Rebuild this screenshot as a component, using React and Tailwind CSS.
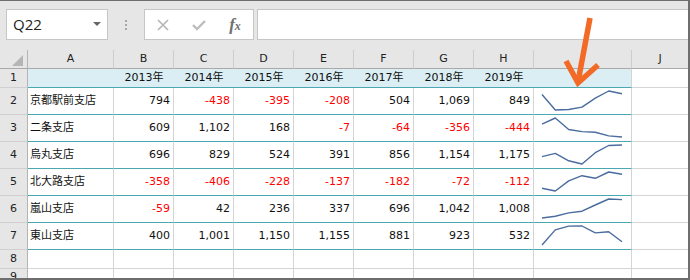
import React from "react";

const cols = ["A", "B", "C", "D", "E", "F", "G", "H", "I", "J"];
const years = [2013, 2014, 2015, 2016, 2017, 2018, 2019];

const branches = [
  { name: "京都駅前支店", values: [794, -438, -395, -208, 504, 1069, 849] },
  { name: "二条支店", values: [609, 1102, 168, -7, -64, -356, -444] },
  { name: "烏丸支店", values: [696, 829, 524, 391, 856, 1154, 1175] },
  { name: "北大路支店", values: [-358, -406, -228, -137, -182, -72, -112] },
  { name: "嵐山支店", values: [-59, 42, 236, 337, 696, 1042, 1008] },
  { name: "東山支店", values: [400, 1001, 1150, 1155, 881, 923, 532] },
];

const teal = "border-b-[#4ba7b1]";

function Sparkline({ values }) {
  const min = Math.min(...values);
  const max = Math.max(...values);
  const pts = values
    .map((v, i) => {
      const x = 8 + (i * 80) / 6;
      const y = 22 - ((v - min) / (max - min)) * 19;
      return `${x.toFixed(1)},${y.toFixed(1)}`;
    })
    .join(" ");
  return (
    <svg width="97" height="26" className="block">
      <polyline points={pts} fill="none" stroke="#4a6c9f" strokeWidth="1.4" strokeLinejoin="round" />
    </svg>
  );
}

function RowHead({ n }) {
  return (
    <div className="bg-[#e6e6e6] border-r border-b border-r-[#b4b4b4] border-b-[#cfcfcf] flex items-center justify-center text-[#222]">
      {n}
    </div>
  );
}

export default function App() {
  return (
    <div
      className="relative w-[690px] h-[280px] bg-[#e6e6e6] border-t border-r-2 border-b-2 border-[#6e6e6e] flex flex-col overflow-hidden text-[11px]"
      style={{ fontFamily: '"DejaVu Sans", "Noto Sans CJK JP", sans-serif' }}
    >
      {/* toolbar */}
      <div className="h-[49px] shrink-0 pt-[8px] pl-[6px] flex items-start">
        <div className="w-[102px] h-[31px] bg-white border border-[#c6c6c6] flex items-center justify-between pl-[6px] pr-[6px]">
          <span className="text-[15px] text-[#222]" style={{ fontFamily: '"Open Sans", sans-serif' }}>Q22</span>
          <svg width="8" height="5"><polygon points="0,0 8,0 4,4" fill="#666" /></svg>
        </div>
        <div className="w-[36px] h-[31px] flex flex-col items-center justify-center gap-[2px]">
          <div className="w-[2px] h-[2px] bg-[#a8a8a8]" />
          <div className="w-[2px] h-[2px] bg-[#a8a8a8]" />
          <div className="w-[2px] h-[2px] bg-[#a8a8a8]" />
        </div>
        <div className="w-[110px] h-[31px] bg-white border border-[#c6c6c6] flex items-center">
          <div className="w-[36px] flex justify-center">
            <svg width="12" height="12"><path d="M1 1 L11 11 M11 1 L1 11" stroke="#b5b5b5" strokeWidth="1.6" /></svg>
          </div>
          <div className="w-[36px] flex justify-center">
            <svg width="14" height="12"><path d="M1 6 L5 10 L13 2" stroke="#bdbdbd" strokeWidth="2.4" fill="none" /></svg>
          </div>
          <div className="w-[36px] flex justify-center">
            <span className="italic font-bold text-[#707070] text-[17px] leading-none" style={{ fontFamily: '"Liberation Serif", serif' }}>
              f<span className="text-[12px]">x</span>
            </span>
          </div>
        </div>
        <div className="ml-[3px] flex-1 h-[31px] bg-white border border-[#c6c6c6] border-r-0" />
      </div>

      {/* sheet */}
      <div className="flex-1 grid grid-cols-[28px_86px_60px_60px_60px_60px_60px_60px_60px_98px_1fr] grid-rows-[19px_19px_repeat(6,27px)_19px_1fr] bg-white text-[#111]">
        {/* column headers */}
        <div className="relative bg-[#e6e6e6] border-r border-b border-r-[#b4b4b4] border-b-[#a9a9a9]">
          <svg width="27" height="18" className="absolute left-0 top-0">
            <polygon points="23,5 23,16 12,16" fill="#b5b5b5" />
          </svg>
        </div>
        {cols.map((c, i) => (
          <div
            key={c}
            className={`bg-[#e6e6e6] border-b border-b-[#a9a9a9] flex items-center justify-center text-[#222] ${i < cols.length - 1 ? "border-r border-r-[#cdcdcd]" : ""}`}
          >
            {c}
          </div>
        ))}

        {/* row 1 */}
        <RowHead n={1} />
        <div className={`bg-[#daeef3] border-b ${teal}`} />
        {years.map((y) => (
          <div key={y} className={`bg-[#daeef3] border-b ${teal} flex items-center justify-center`}>
            {y}年
          </div>
        ))}
        <div className={`bg-[#daeef3] border-b border-r border-r-[#d4d4d4] ${teal}`} />
        <div className="border-b border-b-[#d4d4d4]" />

        {/* data rows */}
        {branches.map((b, r) => (
          <React.Fragment key={b.name}>
            <RowHead n={r + 2} />
            <div className={`border-r border-b border-r-[#d4d4d4] ${teal} flex items-center pl-[2px]`}>{b.name}</div>
            {b.values.map((v, i) => (
              <div
                key={i}
                className={`border-r border-b border-r-[#d4d4d4] ${teal} flex items-center justify-end pr-[3px] ${v < 0 ? "text-[#ff0000]" : ""}`}
              >
                {v.toLocaleString("en-US")}
              </div>
            ))}
            <div className={`border-r border-b border-r-[#d4d4d4] ${teal}`}>
              <Sparkline values={b.values} />
            </div>
            <div className="border-b border-b-[#d4d4d4]" />
          </React.Fragment>
        ))}

        {/* empty rows 8, 9 */}
        {[8, 9].map((n) => (
          <React.Fragment key={n}>
            <RowHead n={n} />
            {cols.map((c, i) => (
              <div
                key={c}
                className={`border-b border-b-[#d4d4d4] ${i < cols.length - 1 ? "border-r border-r-[#d4d4d4]" : ""}`}
              />
            ))}
          </React.Fragment>
        ))}
      </div>

      {/* orange arrow annotation */}
      <svg width="690" height="100" className="absolute left-0 top-[-1px] pointer-events-none">
        <path d="M590 18 L578 82" stroke="#f26a25" strokeWidth="5.5" fill="none" />
        <path d="M566 61 L578 83 L598 65" stroke="#f26a25" strokeWidth="5.5" fill="none" strokeLinejoin="miter" />
      </svg>
    </div>
  );
}
